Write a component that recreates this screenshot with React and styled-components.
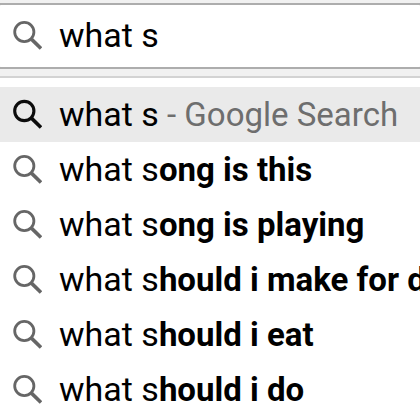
import React, { useState } from 'react'
import styled, { createGlobalStyle } from 'styled-components'


const GlobalStyle = createGlobalStyle`
  * {
    box-sizing: border-box;
  }

  body {
    margin: 0;
    background: #fff;
    color: #000;
    font-family: Roboto, "Liberation Sans", sans-serif;
    font-size: 34px;
    overflow: hidden;
  }
`

const Toolbar = styled.header`
  padding: 3px 0 7px;
  background: #f1f1f1;
  border-bottom: 2px solid #d3d3d3;
`

const SearchBox = styled.label`
  display: flex;
  align-items: center;
  gap: 17px;
  height: 66px;
  margin: 0 -3px;
  padding: 0 13px 2px;
  background: #fff;
  border: 2px solid #adadad;
  border-radius: 4px;
`

const SearchInput = styled.input`
  flex: 1;
  min-width: 0;
  padding: 0;
  border: 0;
  outline: 0;
  background: none;
  color: inherit;
  font: inherit;
`

const Icon = styled.svg`
  flex: none;
  width: 30px;
  height: 30px;
  color: ${props => props.$active ? '#0c0c0c' : '#666'};
`

const Suggestions = styled.ul`
  margin: 0;
  padding: 9px 0;
  list-style: none;
`

const Suggestion = styled.button`
  display: flex;
  align-items: center;
  gap: 17px;
  width: 100%;
  height: 55px;
  padding: 0 12px 2px;
  border: 0;
  background: ${props => props.$active ? '#eaeaea' : 'none'};
  color: inherit;
  font: inherit;
  text-align: left;
  white-space: nowrap;
`

const Completion = styled.b`
  font-size: 33px;
  font-weight: 700;
`

const Hint = styled.span`
  color: #6e6e6e;
  font-size: 33px;
`

const completions = [
  'ong is this',
  'ong is playing',
  'hould i make for dinner',
  'hould i eat',
  'hould i do',
]

function SearchIcon({ active }) {
  return (
    <Icon $active={active} viewBox="0 0 30 30" fill="none" stroke="currentColor" aria-hidden="true">
      <circle cx="12.3" cy="12" r="9.6" strokeWidth={active ? 3.1 : 2.8} />
      <path d="M19.7 19.4 29 28.5" strokeWidth="3.6" />
    </Icon>
  )
}

export default function App() {

  const [query, setQuery] = useState('what s')

  return (
    <>
      <GlobalStyle />
      <Toolbar>
        <SearchBox>
          <SearchIcon />
          <SearchInput
            type="text"
            aria-label="Search"
            spellCheck={false}
            value={query}
            onChange={(e) => setQuery(e.target.value)}
          />
        </SearchBox>
      </Toolbar>
      <Suggestions>
        <li>
          <Suggestion type="button" $active>
            <SearchIcon active />
            <span>{query}<Hint> - Google Search</Hint></span>
          </Suggestion>
        </li>
        {completions.map((text) => (
          <li key={text}>
            <Suggestion type="button">
              <SearchIcon />
              <span>{query}<Completion>{text}</Completion></span>
            </Suggestion>
          </li>
        ))}
      </Suggestions>
    </>
  )
}
